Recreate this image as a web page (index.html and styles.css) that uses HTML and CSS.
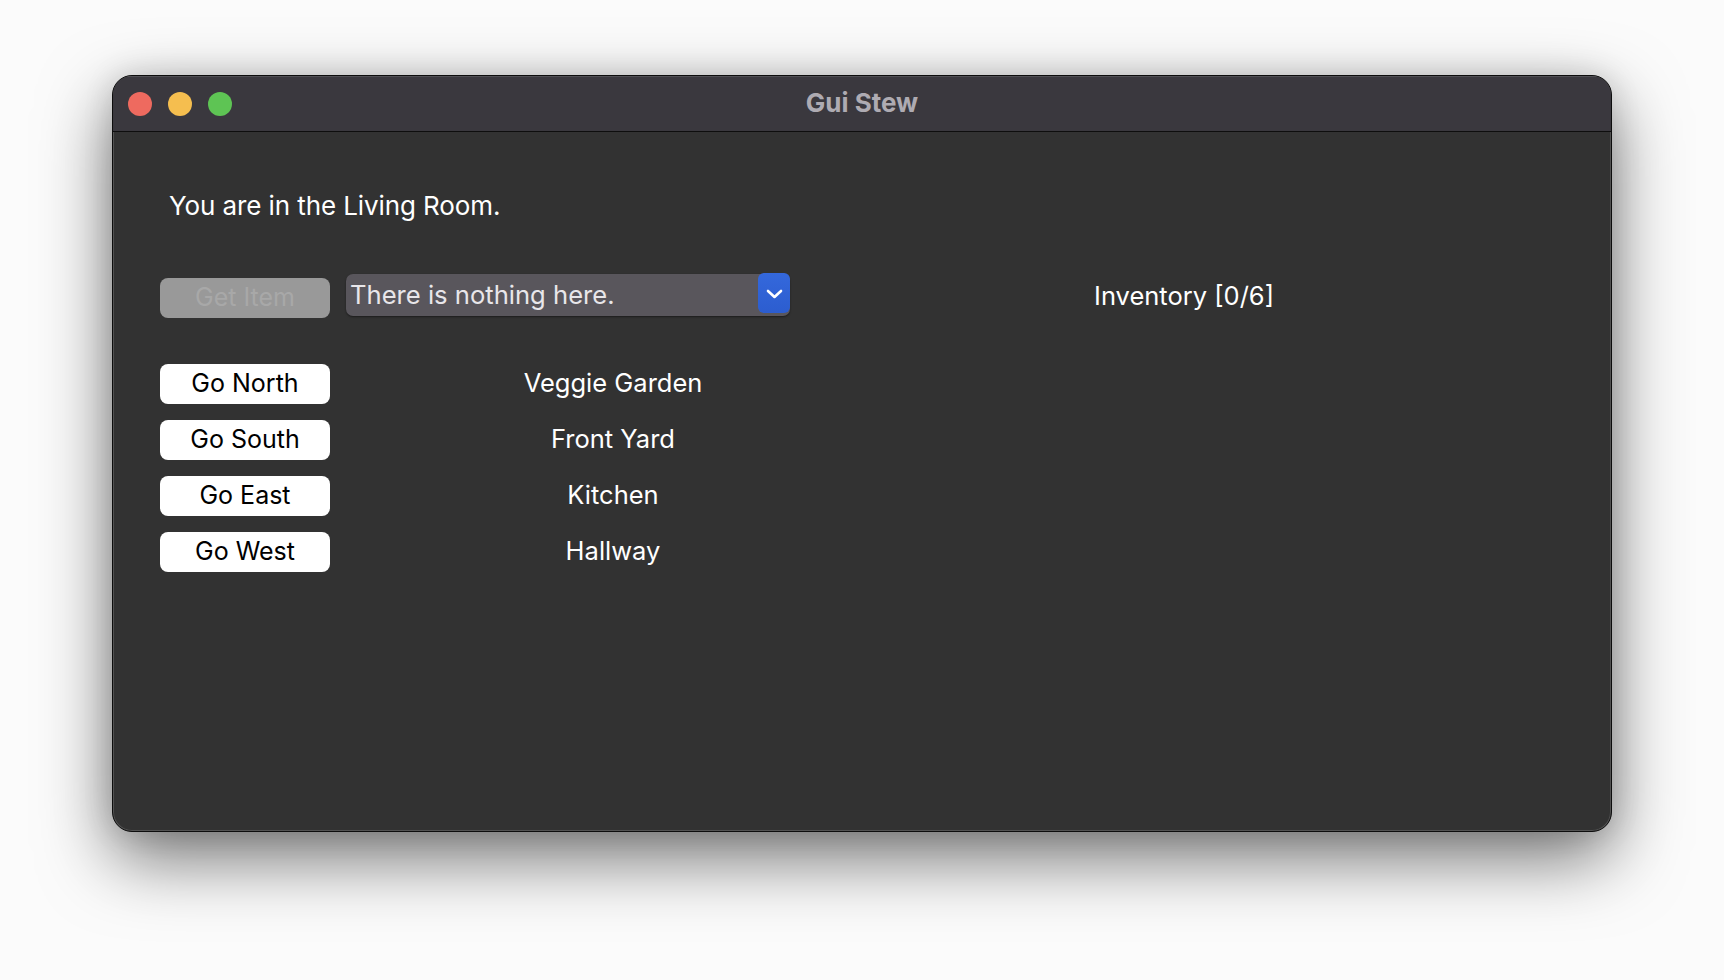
FILE: index.html
```html
<!DOCTYPE html>
<html lang="en">
<head>
<meta charset="utf-8">
<title>Gui Stew</title>
<link rel="stylesheet" href="styles.css">
</head>
<body>
<div class="window">
  <div class="titlebar">
    <div class="lights">
      <span class="light red"></span>
      <span class="light yellow"></span>
      <span class="light green"></span>
    </div>
    <div class="title">Gui Stew</div>
    <div class="spacer"></div>
  </div>
  <div class="content">
    <p class="location">You are in the Living Room.</p>
    <div class="item-row">
      <button class="btn btn-disabled" disabled>Get Item</button>
      <div class="combo">
        <span class="combo-text">There is nothing here.</span>
        <span class="combo-arrow">
          <svg width="17" height="10" viewBox="0 0 17 10"><path d="M2 2 L8.5 8 L15 2" fill="none" stroke="#fff" stroke-width="2.6" stroke-linecap="round" stroke-linejoin="round"/></svg>
        </span>
      </div>
      <div class="inventory">Inventory [0/6]</div>
    </div>
    <div class="nav">
      <div class="nav-row"><button class="btn">Go North</button><span class="dest">Veggie Garden</span></div>
      <div class="nav-row"><button class="btn">Go South</button><span class="dest">Front Yard</span></div>
      <div class="nav-row"><button class="btn">Go East</button><span class="dest">Kitchen</span></div>
      <div class="nav-row"><button class="btn">Go West</button><span class="dest">Hallway</span></div>
    </div>
  </div>
</div>
</body>
</html>
```
FILE: styles.css
```css
* { box-sizing: border-box; }
html, body { margin: 0; padding: 0; }
body {
  width: 1724px;
  height: 980px;
  overflow: hidden;
  background: #fbfbfb;
  font-family: Inter, "Liberation Sans", sans-serif;
}
.window {
  margin: 75px 0 0 112px;
  width: 1500px;
  height: 757px;
  border: 1px solid #0d0d0d;
  border-radius: 20px;
  background: #323232;
  overflow: hidden;
  display: flex;
  flex-direction: column;
  box-shadow: inset 0 0 0 1px rgba(255,255,255,0.16), 0 26px 70px rgba(0,0,0,0.55), 0 0 30px rgba(0,0,0,0.12);
}
.titlebar {
  height: 56px;
  flex: none;
  background: #3a383e;
  border-bottom: 1px solid #0e0e0e;
  display: grid;
  grid-template-columns: 1fr auto 1fr;
  align-items: center;
  box-shadow: inset 0 1px 0 rgba(255,255,255,0.12);
}
.lights {
  display: flex;
  gap: 16px;
  padding-left: 15px;
  padding-top: 1px;
}
.light {
  width: 24px;
  height: 24px;
  border-radius: 50%;
  display: block;
}
.red { background: #ee6a5f; }
.yellow { background: #f5be4f; }
.green { background: #5ec454; }
.title {
  font-weight: 700;
  font-size: 26px;
  color: #aeabb2;
  margin-top: -2px;
}
.content {
  flex: 1;
  padding: 58px 0 0 47px;
  color: #ffffff;
}
.location {
  margin: 0 0 0 9px;
  font-size: 26px;
  letter-spacing: -0.1px;
  line-height: 32px;
}
.item-row {
  display: flex;
  align-items: flex-start;
  margin-top: 52px;
  height: 44px;
}
.btn {
  width: 170px;
  height: 40px;
  border: none;
  border-radius: 8px;
  background: #ffffff;
  color: #000;
  font-family: inherit;
  font-size: 25px;
  line-height: 38px;
  padding: 0 0 2px;
  text-align: center;
}
.btn-disabled {
  margin-top: 4px;
  background: #999999;
  color: #a8a8a8;
}
.combo {
  margin-left: 16px;
  width: 444px;
  height: 42px;
  border-radius: 7px;
  background: #59565c;
  display: flex;
  align-items: center;
  box-shadow: 0 1px 2px rgba(0,0,0,0.45);
}
.combo-text {
  flex: 1;
  padding-left: 4px;
  padding-bottom: 1px;
  font-size: 25.6px;
  color: #e8e6ea;
}
.combo-arrow {
  width: 32px;
  height: 40px;
  margin-top: -1px;
  align-self: flex-start;
  border-radius: 6px;
  background: linear-gradient(#3468dc, #2c5dcf);
  display: flex;
  align-items: center;
  justify-content: center;
}
.combo-arrow svg { display: block; margin-top: 1px; }
.inventory {
  margin-left: 106px;
  width: 576px;
  text-align: center;
  font-size: 25.5px;
  line-height: 44px;
}
.nav {
  margin-top: 46px;
  display: flex;
  flex-direction: column;
  gap: 16px;
}
.nav-row {
  display: flex;
  align-items: center;
  height: 40px;
}
.dest {
  margin-left: 16px;
  width: 534px;
  text-align: center;
  font-size: 25.5px;
  line-height: 38px;
  padding-bottom: 2px;
}
```
